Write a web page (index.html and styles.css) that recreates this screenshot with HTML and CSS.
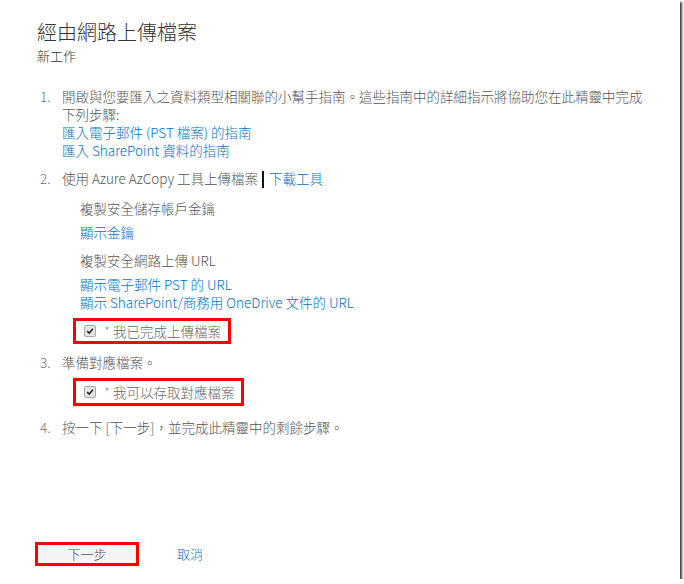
FILE: index.html
```html
<!DOCTYPE html>
<html lang="zh-Hant">
<head>
    <meta charset="UTF-8">
    <title>經由網路上傳檔案</title>
    <link rel="stylesheet" href="styles.css">
</head>
<body>
    <div class="panel">
        <div class="head">
            <h1 class="title">經由網路上傳檔案</h1>
            <div class="subtitle">新工作</div>
        </div>

        <ol class="steps">
            <li class="step">
                <span class="num">1.</span>
                <div class="step-body">
                    <div class="wrap">開啟與您要匯入之資料類型相關聯的小幫手指南。這些指南中的詳細指示將協助您在此精靈中完成下列步驟:</div>
                    <a class="link" href="#">匯入電子郵件 (PST 檔案) 的指南</a>
                    <a class="link" href="#">匯入 SharePoint 資料的指南</a>
                </div>
            </li>
            <li class="step">
                <span class="num">2.</span>
                <div class="step-body">
                    <div>使用 Azure AzCopy 工具上傳檔案<span class="bar"></span><a class="inline-link" href="#">下載工具</a></div>
                    <div class="sub">
                        <div class="sub-label">複製安全儲存帳戶金鑰</div>
                        <a class="link gap-s" href="#">顯示金鑰</a>
                        <div class="sub-label gap-m">複製安全網路上傳 URL</div>
                        <a class="link gap-s" href="#">顯示電子郵件 PST 的 URL</a>
                        <a class="link" href="#">顯示 SharePoint/商務用 OneDrive 文件的 URL</a>
                        <div class="mark check-row first">
                            <span class="box"><svg viewBox="0 0 10 10" width="8" height="8"><path d="M1.5 5.2 L4 7.6 L8.6 2.2" fill="none" stroke="#222" stroke-width="1.9"/></svg></span>
                            <span class="req">*</span> 我已完成上傳檔案
                        </div>
                    </div>
                </div>
            </li>
            <li class="step s3">
                <span class="num">3.</span>
                <div class="step-body">
                    <div>準備對應檔案。</div>
                    <div class="sub">
                        <div class="mark check-row second">
                            <span class="box"><svg viewBox="0 0 10 10" width="8" height="8"><path d="M1.5 5.2 L4 7.6 L8.6 2.2" fill="none" stroke="#222" stroke-width="1.9"/></svg></span>
                            <span class="req">*</span> 我可以存取對應檔案
                        </div>
                    </div>
                </div>
            </li>
            <li class="step s4">
                <span class="num">4.</span>
                <div class="step-body">按一下 [下一步]，並完成此精靈中的剩餘步驟。</div>
            </li>
        </ol>

        <div class="actions">
            <span class="mark btn-mark"><button class="btn">下一步</button></span>
            <a class="cancel" href="#">取消</a>
        </div>
    </div>
</body>
</html>
```

FILE: styles.css
```css
body {
    margin: 0;
    background: #fff;
    font-family: "Segoe UI", "Noto Sans CJK TC", sans-serif;
    font-size: 13.5px;
    font-weight: 300;
    line-height: 18px;
    color: #555;
}

.panel {
    width: 680px;
    height: 579px;
    box-sizing: border-box;
    background: #fff;
    box-shadow: 2px 2px 2px rgba(0, 0, 0, 0.75);
    display: flex;
    flex-direction: column;
    padding: 18px 0 13px 37px;
}

.title {
    margin: 0;
    font-size: 20px;
    line-height: 28px;
    font-weight: 300;
    color: #333;
}

.subtitle {
    font-size: 13px;
    line-height: 19px;
    color: #333;
}

.steps {
    list-style: none;
    margin: 22px 0 0;
    padding: 0;
    width: 614px;
}

.step {
    display: flex;
    margin-top: 10px;
}

.step:first-child {
    margin-top: 0;
}

.step.s3 {
    margin-top: 9px;
}

.step.s4 {
    margin-top: 12px;
}

.num {
    width: 22px;
    padding-left: 3px;
    color: #777;
}

.step-body {
    flex: 1;
}

.link {
    display: block;
    color: #0072c6;
    text-decoration: none;
}

.inline-link {
    color: #0072c6;
    text-decoration: none;
}

.bar {
    display: inline-block;
    width: 2px;
    height: 17px;
    background: #111;
    margin: 0 5px 0 4px;
    vertical-align: -4px;
}

.sub {
    padding-left: 18px;
    margin-top: 11px;
}

.gap-s {
    margin-top: 6px;
}

.gap-m {
    margin-top: 10px;
}

.mark {
    border: 3px solid #f00;
}

.check-row {
    display: flex;
    align-items: center;
    height: 20px;
    padding: 0 7px 0 8px;
    margin-left: -7px;
    width: fit-content;
    color: #666;
}

.check-row.first {
    margin-top: 7px;
}

.check-row.second {
    margin-top: -4px;
    height: 22px;
}

.box {
    width: 10px;
    height: 10px;
    border: 1px solid #a8a8a8;
    border-radius: 2px;
    background: #e4e4e4;
    display: flex;
    align-items: center;
    justify-content: center;
    margin-right: 8px;
}

.req {
    color: #999;
    margin-right: 3px;
}

.actions {
    margin-top: auto;
    display: flex;
    align-items: center;
    margin-left: -2px;
}

.btn-mark {
    display: inline-flex;
}

.btn {
    width: 98px;
    height: 18px;
    border: 0;
    padding: 0;
    background: #f4f4f4;
    font-family: inherit;
    font-size: 13px;
    font-weight: 300;
    line-height: 18px;
    color: #555;
}

.cancel {
    margin-left: 38px;
    font-size: 13px;
    color: #0072c6;
    text-decoration: none;
}
```
